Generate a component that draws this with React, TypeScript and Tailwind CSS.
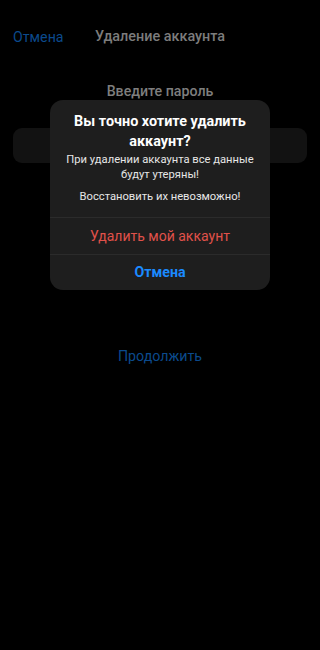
import React from "react";

export default function App() {
  return (
    <div
      className="relative min-h-[650px] w-[320px] bg-black"
      style={{ fontFamily: "Roboto, 'Noto Sans', sans-serif" }}
    >
      <div className="grid grid-cols-[1fr_auto_1fr] items-center px-[13px] pt-[26px]">
        <span className="text-[14.2px] leading-[22px] text-[#0b4a8c]">Отмена</span>
        <span className="text-[14.4px] leading-[22px] font-medium text-[#7c7c7c]">Удаление аккаунта</span>
        <span />
      </div>
      <div className="mt-[32px] text-center text-[14.2px] leading-[22px] font-medium text-[#7e7e7e]">
        Введите пароль
      </div>
      <div className="mx-[13px] mt-[26px] h-[35px] rounded-[9px] bg-[#121212]" />
      <div className="mt-[182px] text-center text-[14.2px] leading-[22px] text-[#0b4a8c]">
        Продолжить
      </div>

      <div className="absolute left-[50px] top-[100px] w-[220px] overflow-hidden rounded-[13px] bg-[#1e1e1e]">
        <div className="flex h-[117px] flex-col items-center px-[10px] pt-[12px] text-center">
          <div className="text-[14.4px] leading-[20px] font-bold text-white">
            Вы точно хотите удалить аккаунт?
          </div>
          <div className="text-[11.2px] leading-[15px] text-[#e6e6e6]">
            При удалении аккаунта все данные будут утеряны!
          </div>
          <div className="mt-[7px] text-[11.2px] leading-[15px] text-[#e6e6e6]">
            Восстановить их невозможно!
          </div>
        </div>
        <div className="h-px bg-[#2b2b2b]" />
        <div className="flex h-[36px] items-center justify-center text-[14px] text-[#e0514a]">
          Удалить мой аккаунт
        </div>
        <div className="h-px bg-[#2b2b2b]" />
        <div className="flex h-[35px] items-center justify-center text-[14.2px] font-bold text-[#1b8aff]">
          Отмена
        </div>
      </div>
    </div>
  );
}
